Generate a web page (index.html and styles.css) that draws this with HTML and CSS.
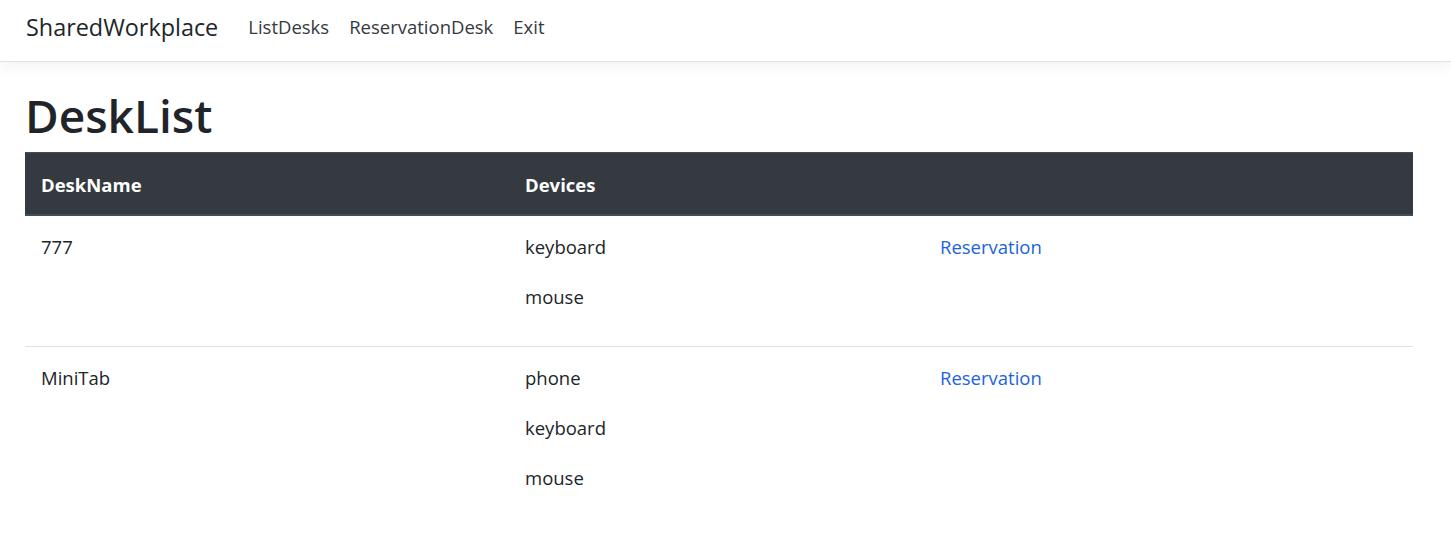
FILE: index.html
```html
<!DOCTYPE html>
<html lang="en">
<head>
<meta charset="utf-8">
<title>DeskList - SharedWorkplace</title>
<link rel="stylesheet" href="styles.css">
</head>
<body>
<header class="navbar">
  <a class="brand" href="#">SharedWorkplace</a>
  <nav class="nav">
    <a class="nav-link" href="#">ListDesks</a>
    <a class="nav-link" href="#">ReservationDesk</a>
    <a class="nav-link" href="#">Exit</a>
  </nav>
</header>
<main class="content">
  <h1 class="title">DeskList</h1>
  <table class="desk-table">
    <thead>
      <tr>
        <th class="col-name">DeskName</th>
        <th class="col-devices">Devices</th>
        <th class="col-action"></th>
      </tr>
    </thead>
    <tbody>
      <tr>
        <td>777</td>
        <td>
          <p class="device">keyboard</p>
          <p class="device">mouse</p>
        </td>
        <td><a class="link" href="#">Reservation</a></td>
      </tr>
      <tr>
        <td>MiniTab</td>
        <td>
          <p class="device">phone</p>
          <p class="device">keyboard</p>
          <p class="device">mouse</p>
        </td>
        <td><a class="link" href="#">Reservation</a></td>
      </tr>
    </tbody>
  </table>
</main>
</body>
</html>
```
FILE: styles.css
```css
* { box-sizing: border-box; }
html, body { margin: 0; padding: 0; }
body {
  font-family: "Open Sans", "Noto Sans", "Liberation Sans", sans-serif;
  font-size: 18.5px;
  line-height: 30px;
  color: #212529;
  background: #fff;
}
a { text-decoration: none; }

.navbar {
  height: 62px;
  display: flex;
  align-items: center;
  padding: 0 0 8px 26px;
  border-bottom: 1px solid #dee2e6;
  box-shadow: 0 5px 15px rgba(0, 0, 0, 0.05);
  background: #fff;
}
.brand {
  font-size: 23.4px;
  color: #212529;
  margin-right: 20px;
  line-height: 36px;
}
.nav { display: flex; gap: 0; }
.nav-link {
  color: #343a40;
  font-size: 18.5px;
  line-height: 30px;
  padding: 0 10px;
}

.content { padding: 0 38px 0 25px; }
.title {
  margin: 24px 0 8px 0;
  font-size: 46px;
  font-weight: 600;
  line-height: 58px;
  color: #212529;
}

.desk-table {
  width: 1388px;
  border-collapse: collapse;
}
.desk-table th {
  text-align: left;
  background: #343a40;
  color: #fff;
  font-weight: 700;
  border-top: 1px solid #454d55;
  border-bottom: 2px solid #454d55;
  padding: 17px 16px 14px;
  line-height: 30px;
}
.col-name { width: 484px; }
.col-devices { width: 415px; }
.col-action { width: 489px; }
.desk-table td {
  vertical-align: top;
  padding: 16px 16px 14px;
  line-height: 30px;
}
.desk-table tbody tr + tr td { border-top: 1px solid #dee2e6; }
.device { margin: 0 0 20px; }
.link { color: #1d63dc; }
```
